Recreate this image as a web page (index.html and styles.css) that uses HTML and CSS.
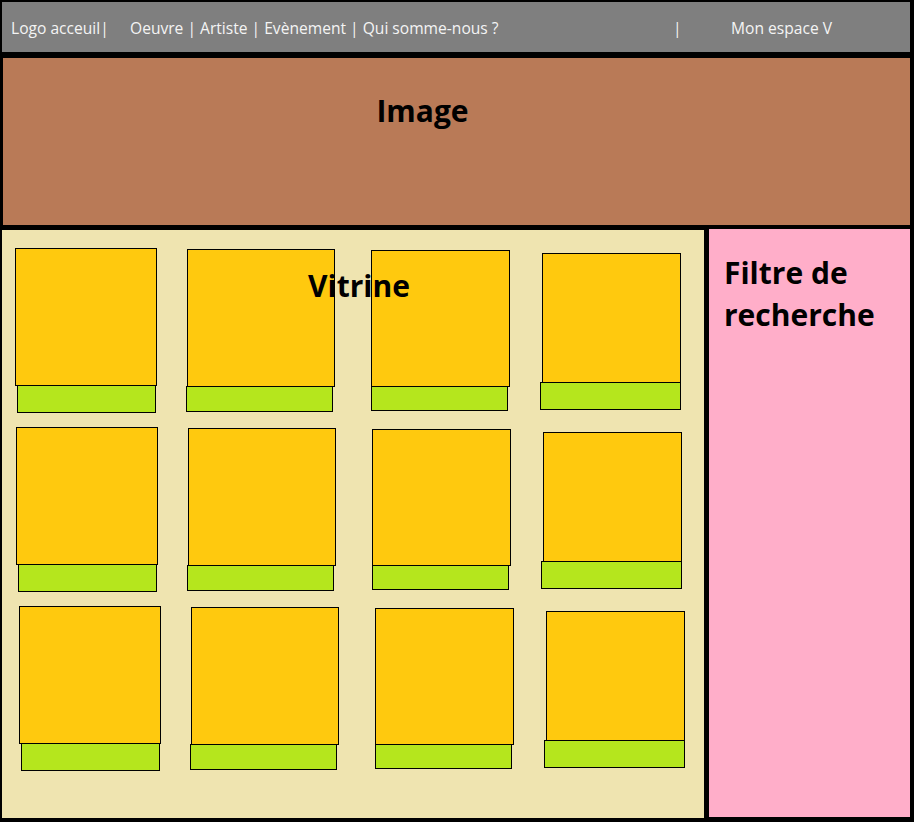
FILE: index.html
```html
<!DOCTYPE html>
<html lang="fr">
<head>
<meta charset="utf-8">
<title>Maquette</title>
<link rel="stylesheet" href="styles.css">
</head>
<body>
<header class="topbar">
  <span class="nav-logo">Logo acceuil|</span>
  <span class="nav-links">Oeuvre | Artiste | Evènement | Qui somme-nous ?</span>
  <span class="nav-sep">|</span>
  <span class="nav-account">Mon espace V</span>
</header>

<section class="hero">
  <h1 class="hero-title">Image</h1>
</section>

<div class="content">
  <main class="vitrine">
    <h2 class="vitrine-title">Vitrine</h2>
    <div class="row row-1">
      <div class="card col-1"><div class="card-img"></div><div class="card-label"></div></div>
      <div class="card col-2"><div class="card-img"></div><div class="card-label"></div></div>
      <div class="card col-3"><div class="card-img"></div><div class="card-label"></div></div>
      <div class="card col-4"><div class="card-img"></div><div class="card-label"></div></div>
    </div>
    <div class="row row-2">
      <div class="card col-1"><div class="card-img"></div><div class="card-label"></div></div>
      <div class="card col-2"><div class="card-img"></div><div class="card-label"></div></div>
      <div class="card col-3"><div class="card-img"></div><div class="card-label"></div></div>
      <div class="card col-4"><div class="card-img"></div><div class="card-label"></div></div>
    </div>
    <div class="row row-3">
      <div class="card col-1"><div class="card-img"></div><div class="card-label"></div></div>
      <div class="card col-2"><div class="card-img"></div><div class="card-label"></div></div>
      <div class="card col-3"><div class="card-img"></div><div class="card-label"></div></div>
      <div class="card col-4"><div class="card-img"></div><div class="card-label"></div></div>
    </div>
  </main>
  <aside class="filters">
    <h2 class="filters-title">Filtre de recherche</h2>
  </aside>
</div>
</body>
</html>
```

FILE: styles.css
```css
* { box-sizing: border-box; }

html, body {
  margin: 0;
  padding: 0;
  background: #000;
}

body {
  width: 914px;
  height: 822px;
  overflow: hidden;
  font-family: "Open Sans", "DejaVu Sans", sans-serif;
}

/* ---------- top bar ---------- */
.topbar {
  margin: 2px 4px 0 2px;
  height: 50px;
  background: #7f7f7f;
  color: #f4f4f4;
  font-size: 15.6px;
  display: flex;
  align-items: center;
  padding-left: 9px;
  padding-top: 1px;
  white-space: nowrap;
}
.nav-logo { width: 119px; }
.nav-links { width: 543px; }
.nav-sep { width: 58px; }

/* ---------- hero ---------- */
.hero {
  margin: 6px 4px 0 3px;
  height: 167px;
  background: #b97a57;
  display: flex;
  justify-content: center;
  padding-top: 38px;
  padding-right: 68px;
}
.hero-title {
  margin: 0;
  font-size: 30px;
  font-weight: 700;
  line-height: 1;
  color: #000;
}

/* ---------- content ---------- */
.content {
  display: flex;
  margin-top: 5px;
  height: 588px;
  gap: 5px;
}

.vitrine {
  position: relative;
  margin-left: 2px;
  width: 702px;
  height: 588px;
  background: #efe4b0;
  padding-top: 18px;
  display: flex;
  flex-direction: column;
  gap: 14px;
}

.vitrine-title {
  position: absolute;
  top: 41px;
  left: 306px;
  margin: 0;
  font-size: 30px;
  font-weight: 700;
  line-height: 1;
  color: #000;
  z-index: 2;
}

.row {
  display: grid;
  grid-template-columns: 172px 184px 171px 139px;
  align-items: start;
}
.row-1 { padding-left: 13px; }
.row-2 { padding-left: 14px; }
.row-3 { padding-left: 17px; }

.card {
  display: flex;
  flex-direction: column;
  align-items: flex-start;
}
.card-img {
  background: #ffc90e;
  border: 1px solid #000;
}
.card-label {
  position: relative;
  background: #b5e61d;
  border: 1px solid #000;
  margin-top: -1px;
}

.col-1 .card-img { width: 142px; height: 138px; }
.col-1 .card-label { width: 139px; height: 28px; margin-left: 2px; }

.col-2 { margin-top: 1px; }
.col-2 .card-img { width: 148px; height: 138px; }
.col-2 .card-label { width: 147px; height: 26px; margin-left: -1px; }

.col-3 { margin-top: 2px; }
.col-3 .card-img { width: 139px; height: 137px; }
.col-3 .card-label { width: 137px; height: 25px; }

.col-4 { margin-top: 5px; }
.col-4 .card-img { width: 139px; height: 130px; }
.col-4 .card-label { width: 141px; height: 28px; margin-left: -2px; }

.filters {
  width: 201px;
  height: 588px;
  margin-top: -1px;
  background: #ffaec9;
  padding: 23px 10px 0 15px;
}
.filters-title {
  margin: 0;
  font-size: 30px;
  font-weight: 700;
  line-height: 42px;
  color: #000;
}
```
